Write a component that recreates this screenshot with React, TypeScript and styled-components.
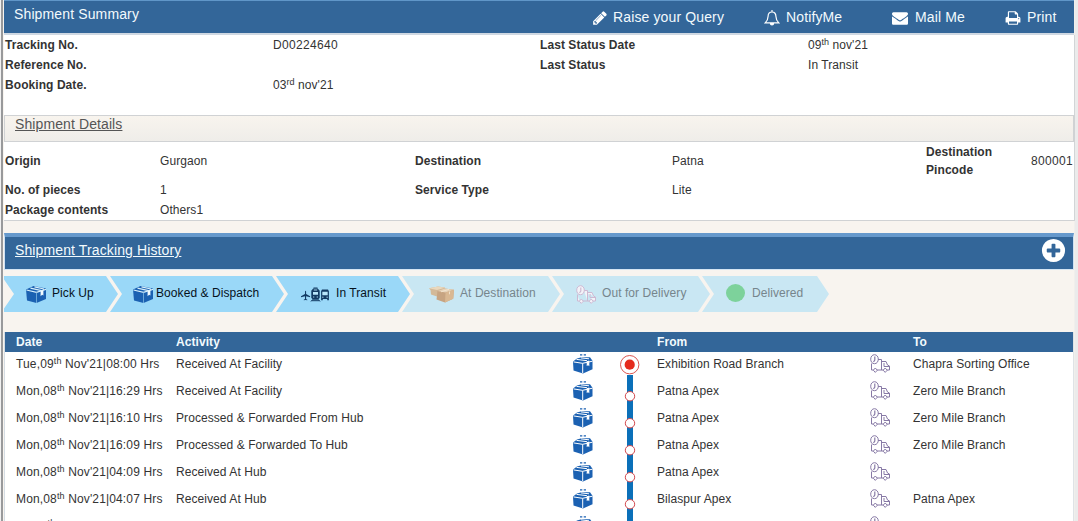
import React from 'react';
import styled, { createGlobalStyle, css } from 'styled-components';

const Global = createGlobalStyle`
  * { box-sizing: border-box; }
  html, body { margin: 0; padding: 0; }
  body {
    height: 521px;
    overflow: hidden;
    background: #f8f4ef;
    font: 12px/20px "Liberation Sans", Arial, sans-serif;
    letter-spacing: 0.07px;
    color: #333;
  }
  sup { font-size: 9px; line-height: 0; vertical-align: baseline; position: relative; top: -4px; }
`;

const Page = styled.div`
  width: 1078px;
  height: 521px;
  overflow: hidden;
  border-left: 1px solid #f1f1f1;
  border-right: 3px solid #ebebeb;
`;

const Frame = styled.div`
  height: 100%;
  border-left: 2px solid #98999b;
  border-right: 1px solid #f1efec;
  padding-left: 1px;
`;

const SummaryBar = styled.header`
  display: flex;
  height: 35px;
  width: 1070px;
  border-top: 1px solid #6096c8;
  border-bottom: 2px solid #cfd8e2;
  background: #336699;
  color: #f2fafd;
  font-size: 14px;
  letter-spacing: 0.13px;
`;

const SummaryTitle = styled.h1`
  margin: 0;
  padding: 3px 0 0 10px;
  width: 588px;
  font-size: 14px;
  font-weight: normal;
  line-height: 20px;
`;

const Actions = styled.nav`
  display: grid;
  grid-template-columns: 172px 128px 113px 60px;
`;

const Action = styled.div<{ $gap: number }>`
  display: flex;
  align-items: center;
  gap: ${p => p.$gap}px;
  height: 32px;
  white-space: nowrap;
  svg { flex: none; margin-top: 2px; }
`;

const Panel = styled.section`
  width: 1071px;
  background: #fff;
  border-right: 1px solid #d2d5d7;
`;

const SummaryGrid = styled(Panel)`
  display: grid;
  grid-template-columns: 268px 267px 268px 1fr;
  grid-auto-rows: 20px;
  height: 80px;
  padding-left: 1px;
`;

const Label = styled.strong`
  font-weight: bold;
`;

const Digits = styled.span`
  letter-spacing: 0.32px;
`;

const DetailsBar = styled.div`
  height: 27px;
  width: 1071px;
  padding-left: 10px;
  border: 1px solid #d0d2d4;
  border-right-width: 2px;
  background: linear-gradient(#f8f4ee, #efede9);
  color: #555;
  font-size: 14px;
  line-height: 17px;
  text-decoration: underline;
  letter-spacing: 0.1px;
`;

const DetailsGrid = styled(Panel)`
  display: grid;
  grid-template-columns: 155px 255px 257px 254px 105px 1fr;
  grid-template-rows: 38px 20px 20px;
  align-items: center;
  height: 79px;
  padding-left: 1px;
  border-bottom: 1px solid #d0d2d4;
`;

const Stacked = styled(Label)`
  line-height: 18px;
  width: 80px;
`;

const HistoryBar = styled.div`
  display: flex;
  justify-content: space-between;
  width: 1070px;
  height: 37px;
  margin-top: 12px;
  padding: 0 6px 0 10px;
  border-top: 4px solid #6699cc;
  border-left: 1px solid #cfe1f3;
  border-right: 1px solid #cfe1f3;
  border-bottom: 1px solid #d5e5f3;
  background: #336699;
  color: #f2fafd;
`;

const HistoryTitle = styled.span`
  font-size: 14px;
  line-height: 27px;
  text-decoration: underline;
  letter-spacing: 0.12px;
`;

const Steps = styled.div`
  display: flex;
  height: 36px;
  margin-top: 6px;
`;

const Step = styled.div<{ $w: number; $pad: number; $gap: number; $done?: boolean; $first?: boolean }>`
  display: flex;
  align-items: center;
  flex: none;
  width: ${p => p.$w}px;
  margin-right: -8px;
  padding: 0 0 2px ${p => p.$pad}px;
  gap: ${p => p.$gap}px;
  white-space: nowrap;
  background: ${p => (p.$done ? '#9ad8f8' : '#c9e7f3')};
  color: ${p => (p.$done ? '#06121c' : '#76858c')};
  clip-path: polygon(0 0, calc(100% - 12px) 0, 100% 50%, calc(100% - 12px) 100%, 0 100%,
    ${p => (p.$first ? '0 90%, 10px 50%, 0 10%' : '12px 50%')});
  svg { flex: none; margin-top: 3px; }
`;

const Dot = styled.span`
  width: 19px;
  height: 18px;
  border-radius: 50%;
  background: #7dd29b;
`;

const Table = styled.div`
  width: 1070px;
  margin-top: 20px;
  border-left: 1px solid #d5dde4;
  border-right: 1px solid #dfe3e6;
  background: #fff;
`;

const cols = css`
  display: grid;
  grid-template-columns: 160px 397px 47px 37px 213px 43px 1fr;
  padding-left: 11px;
`;

const HeadRow = styled.div`
  ${cols}
  height: 20px;
  background: #336699;
  color: #f2fafd;
  font-weight: bold;
`;

const Row = styled.div`
  ${cols}
  height: 27px;
  line-height: 24px;
  white-space: nowrap;
`;

const Cell = styled.div`
  svg { display: block; }
`;

const DateCell = styled(Cell)`
  letter-spacing: 0.14px;
`;

const IconCell = styled(Cell)`
  padding-top: 2px;
`;

const Fa = ({ d, size }: { d: string; size: number }) => (
  <svg width={size} height={size} viewBox="0 0 1792 1792" fill="#fff"><path d={d} /></svg>
);

const PENCIL = 'M491 1536l91-91-235-235-91 91v107h128v128h107zm523-928q0-22-22-22-10 0-17 7l-542 542q-7 7-7 17 0 22 22 22 10 0 17-7l542-542q7-7 7-17zm-54-192l416 416-832 832h-416v-416zm683 96q0 53-37 90l-166 166-416-416 166-165q36-38 90-38 53 0 91 38l235 234q37 39 37 91z';
const ENVELOPE = 'M1792 710v794q0 66-47 113t-113 47h-1472q-66 0-113-47t-47-113v-794q44 49 101 87 362 246 497 345 57 42 92.500 65.500t94.500 48 110 24.500h2q51 0 110-24.500t94.500-48 92.500-65.500q170-123 498-345 57-39 100-87zm0-294q0 79-49 151t-122 123q-376 261-468 325-10 7-42.500 31t-54 38.500-52 32.500-57.500 27-50 9h-2q-23 0-50-9t-57.500-27-52-32.500-54-38.500-42.500-31q-91-64-262-182.500t-205-142.500q-62-42-117-115.500t-55-136.500q0-78 41.500-130t118.500-52h1472q65 0 112.500 47t47.500 113z';
const PRINT = 'M448 1536h896v-256h-896v256zm0-640h896v-384h-160q-40 0-68-28t-28-68v-160h-640v640zm1152 64q0-26-19-45t-45-19-45 19-19 45 19 45 45 19 45-19 19-45zm128 0v416q0 13-9.500 22.500t-22.500 9.500h-224v160q0 40-28 68t-68 28h-960q-40 0-68-28t-28-68v-160h-224q-13 0-22.500-9.500t-9.500-22.500v-416q0-79 56.500-135.500t135.500-56.500h64v-544q0-40 28-68t68-28h672q40 0 88 20t76 48l152 152q28 28 48 76t20 88v256h64q79 0 135.500 56.500t56.500 135.500z';
const PLUS = 'M1344 960v-128q0-26-19-45t-45-19h-256v-256q0-26-19-45t-45-19h-128q-26 0-45 19t-19 45v256h-256q-26 0-45 19t-19 45v128q0 26 19 45t45 19h256v256q0 26 19 45t45 19h128q26 0 45-19t19-45v-256h256q26 0 45-19t19-45zm320-64q0 209-103 385.500t-279.500 279.500-385.500 103-385.500-103-279.500-279.500-103-385.500 103-385.500 279.500-279.500 385.500-103 385.500 103 279.500 279.500 103 385.500z';

const Bell = () => (
  <svg width="16" height="16" viewBox="0 0 16 16" fill="none" stroke="#fff" strokeWidth="1.2">
    <path d="M8 0v2M8 2C5.300 2 4.100 4 4.100 6.200 4.100 9.500 3 11 1.200 12.800h13.600C13 11 11.900 9.500 11.900 6.200 11.900 4 10.700 2 8 2z" />
    <path d="M6.500 13.500a1.500 1.500 0 0 0 3 0z" fill="#fff" />
  </svg>
);

const Parcel = () => (
  <svg width="20" height="17" viewBox="0 0 20 17">
    <path d="M0 3.500L7.500 0 20 2.500V13l-9.500 4L1 14.500z" fill="#1b61b2" />
    <path d="M.5 4L10.500 6.300 20 3.300M4.500 2.200l11 2.500M8.500.8l9.500 2.200" stroke="#d5eefb" strokeWidth="1.200" fill="none" />
    <path d="M10.500 6.300V17" stroke="#7fb8e2" strokeWidth=".8" />
    <path d="M14.600 5l2.800-.8v5.300l-1.300-.8-1.500 1.500z" fill="#f2fbff" />
  </svg>
);

const RowParcel = () => (
  <svg width="20" height="20" viewBox="0 0 20 20">
    <path d="M0 7.500L4 4.500 8.500 3.200H17l2.500 3.600v8.400L10 19.500.5 16.500z" fill="#1b61b2" />
    <path d="M7 .8h2.300M10.700.8h2.300" stroke="#1b61b2" strokeWidth="1.200" />
    <path d="M.5 7.900L9.500 9.300 19.500 7.200M3.500 5.400l10.500 1.300M8 3.900l8 .9M9.700 9.300V19" stroke="#fff" strokeWidth="1" fill="none" />
    <path d="M13.700 7.300l2.600-.7v5.600l-1.200-1-1.400.9z" fill="#fff" />
  </svg>
);

const Truck = ({ color, fill = 'none' }: { color: string; fill?: string }) => (
  <svg width="20" height="19" viewBox="0 0 20 19" fill={fill} stroke={color} strokeWidth="1">
    <path d="M1.500 9.500v6.500h2M7 16h6.500M8 5.500h3.500V16M11.500 7.500h4.500l1.500 3.500 2 1V16h-2.500M14 9v3.500h5" />
    <path d="M4.500.7C6.800.7 8.300 2.700 8.300 5.200S6.800 9.700 4.500 9.700.7 7.700.7 5.200 2.200.7 4.500.7z" />
    <path d="M4.800 2.500V6L3.500 8" strokeWidth="1.200" />
    <path d="M5.300 14l2 2.200-2 2.200-2-2.200zM15.200 14l2 2.200-2 2.200-2-2.200z" />
  </svg>
);

const Vehicles = () => (
  <svg width="28" height="15" viewBox="0 0 28 15">
    <path d="M4.100 4.300c.5-1 1-.5 1 .4V7l4 2.300v1l-4-1v2.600l1.200.8v.6l-1.800-.4-1.700.4v-.6l1.200-.8V9.300l-4 1v-1L4 7z" fill="#123a63" />
    <path d="M12.500 1h4M11.500 12.500l-1.500 2M17.500 12.500l1.500 2M11 13.700h7" stroke="#123a63" strokeWidth="1" />
    <path d="M12.200 1.500h4.600l1.900 2.200v7L17 12.700h-5l-1.700-2v-7z" fill="#123a63" />
    <path d="M12 5h5v2.700h-5z" fill="#b8e5fa" />
    <path d="M12 10h1.300M15.700 10H17M12.800 3h3.400" stroke="#b8e5fa" strokeWidth=".9" />
    <path d="M21 2.500h6l.9 1.700v9h-1.700v-1.300h-4.400v1.300h-1.700v-9z" fill="#123a63" />
    <path d="M21.300 4.700h5.400v3.600h-5.400z" fill="#b8e5fa" />
    <path d="M21.200 10.200h1.300M25.500 10.200h1.300" stroke="#b8e5fa" />
  </svg>
);

const Boxes = () => (
  <svg width="25" height="17" viewBox="0 0 25 17">
    <path d="M0 2.200L9 0.500l7 1-1 7-7 2-6-2L1.500 4z" fill="#d3b998" />
    <path d="M0 2.200l9-1.700 7 1.300-8 2.200z" fill="#ead8bd" />
    <path d="M8.500 5l7-2.500L25 3.800l-.8 9L16 16.500l-8.500-3z" fill="#c7a482" />
    <path d="M8.500 5l7-2.500L25 3.800 16.500 6.500z" fill="#e6d2b8" />
    <path d="M16.500 6.500L25 3.800l-.8 9L16 16.500z" fill="#d9b893" />
    <path d="M12 5.800L20 3.300M20.500 5.500v2.800" stroke="#f5e9d6" strokeWidth=".8" />
  </svg>
);

const Marker = ({ first }: { first: boolean }) => (
  <svg width="20" height="27" viewBox="0 0 20 27">
    {first ? (
      <>
        <path d="M7 23h6v4H7z" fill="#0b70b9" />
        <circle cx="9.700" cy="12.700" r="9.200" fill="#fff" stroke="#db5550" />
        <circle cx="9.700" cy="12.700" r="5.100" fill="#e52a1c" />
      </>
    ) : (
      <>
        <path d="M7 0h6v27H7z" fill="#0b70b9" />
        <circle cx="10" cy="17.200" r="4.700" fill="#fff" stroke="#d44a4e" />
      </>
    )}
  </svg>
);

type Event = { day: string; time: string; activity: string; from: string; to?: string };
const events: Event[] = [
  { day: 'Tue,09', time: '08:00', activity: 'Received At Facility', from: 'Exhibition Road Branch', to: 'Chapra Sorting Office' },
  { day: 'Mon,08', time: '16:29', activity: 'Received At Facility', from: 'Patna Apex', to: 'Zero Mile Branch' },
  { day: 'Mon,08', time: '16:10', activity: 'Processed & Forwarded From Hub', from: 'Patna Apex', to: 'Zero Mile Branch' },
  { day: 'Mon,08', time: '16:09', activity: 'Processed & Forwarded To Hub', from: 'Patna Apex', to: 'Zero Mile Branch' },
  { day: 'Mon,08', time: '04:09', activity: 'Received At Hub', from: 'Patna Apex' },
  { day: 'Mon,08', time: '04:07', activity: 'Received At Hub', from: 'Bilaspur Apex', to: 'Patna Apex' },
];

export default function App() {
  return (
    <>
      <Global />
      <Page>
        <Frame>
          <SummaryBar>
            <SummaryTitle>Shipment Summary</SummaryTitle>
            <Actions>
              <Action $gap={5}><Fa d={PENCIL} size={16} />Raise your Query</Action>
              <Action $gap={6}><Bell />NotifyMe</Action>
              <Action $gap={7}><Fa d={ENVELOPE} size={16} />Mail Me</Action>
              <Action $gap={6}><Fa d={PRINT} size={16} />Print</Action>
            </Actions>
          </SummaryBar>
          <SummaryGrid>
            <Label>Tracking No.</Label><Digits>D00224640</Digits>
            <Label>Last Status Date</Label><span>09<sup>th</sup> nov'21</span>
            <Label>Reference No.</Label><span />
            <Label>Last Status</Label><span>In Transit</span>
            <Label>Booking Date.</Label><span>03<sup>rd</sup> nov'21</span>
          </SummaryGrid>
          <DetailsBar>Shipment Details</DetailsBar>
          <DetailsGrid>
            <Label>Origin</Label><span>Gurgaon</span>
            <Label>Destination</Label><span>Patna</span>
            <Stacked>Destination Pincode</Stacked><Digits>800001</Digits>
            <Label>No. of pieces</Label><span>1</span>
            <Label>Service Type</Label><span>Lite</span><span /><span />
            <Label>Package contents</Label><span>Others1</span>
          </DetailsGrid>
          <HistoryBar>
            <HistoryTitle>Shipment Tracking History</HistoryTitle>
            <Fa d={PLUS} size={27} />
          </HistoryBar>
          <Steps>
            <Step $w={114} $pad={22} $gap={6} $done $first><Parcel />Pick Up</Step>
            <Step $w={174} $pad={23} $gap={3} $done><Parcel />Booked &amp; Dispatch</Step>
            <Step $w={134} $pad={25} $gap={7} $done><Vehicles />In Transit</Step>
            <Step $w={158} $pad={27} $gap={6}><Boxes />At Destination</Step>
            <Step $w={158} $pad={24} $gap={6}><Truck color="#cdb9d2" fill="#f3f3f8" />Out for Delivery</Step>
            <Step $w={127} $pad={24} $gap={7}><Dot />Delivered</Step>
          </Steps>
          <Table>
            <HeadRow>
              <span>Date</span><span>Activity</span><span /><span /><span>From</span><span /><span>To</span>
            </HeadRow>
            {events.map((e, i) => (
              <Row key={i}>
                <DateCell>{e.day}<sup>th</sup> Nov'21|{e.time} Hrs</DateCell>
                <Cell>{e.activity}</Cell>
                <IconCell><RowParcel /></IconCell>
                <Cell><Marker first={i === 0} /></Cell>
                <Cell>{e.from}</Cell>
                <IconCell><Truck color="#887aa6" /></IconCell>
                <Cell>{e.to}</Cell>
              </Row>
            ))}
            <Row>
              <DateCell>Fri,05<sup>th</sup></DateCell>
              <Cell />
              <IconCell><RowParcel /></IconCell>
              <Cell><Marker first={false} /></Cell>
              <Cell />
              <IconCell><Truck color="#887aa6" /></IconCell>
              <Cell />
            </Row>
          </Table>
        </Frame>
      </Page>
    </>
  );
}
